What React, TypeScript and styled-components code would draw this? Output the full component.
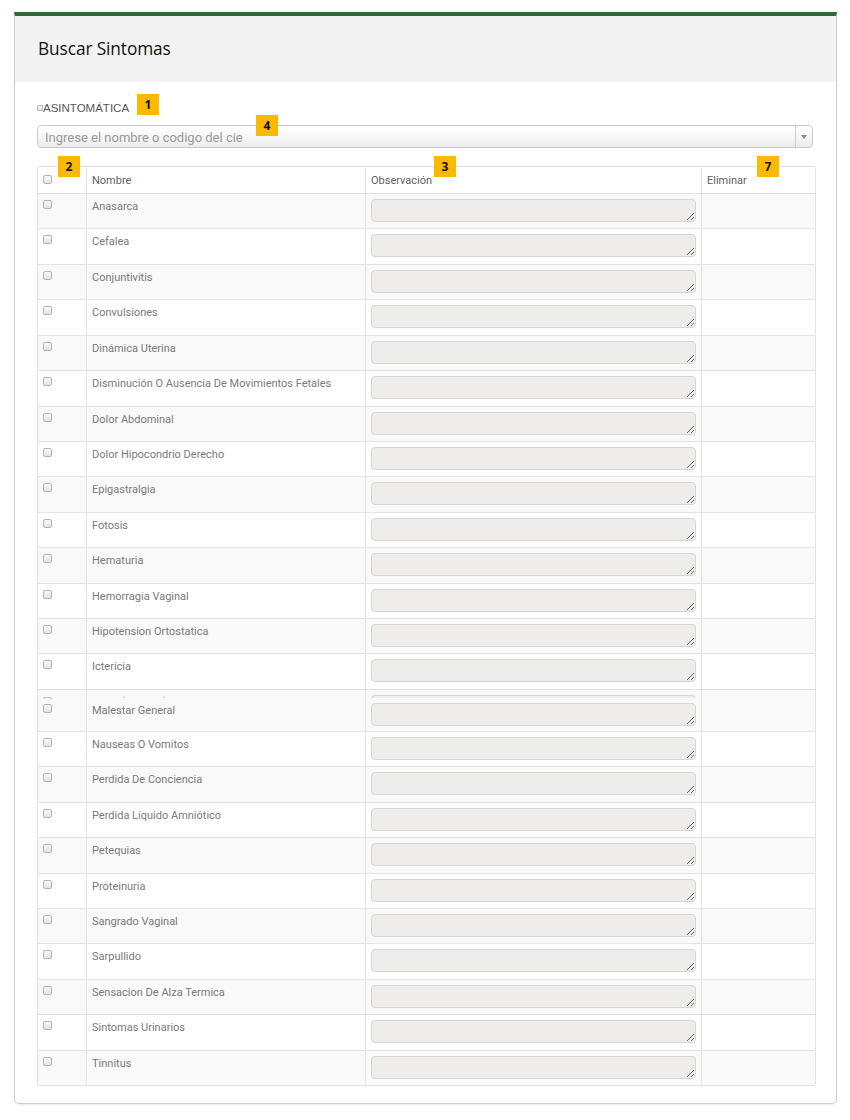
import React from "react";
import styled, { createGlobalStyle } from "styled-components";

const Global = createGlobalStyle`
  html, body { margin: 0; padding: 0; background: #ffffff; }
  body { font-family: Roboto, "Liberation Sans", Arial, sans-serif; }
  * { box-sizing: border-box; }
`;

const Page = styled.div`
  padding: 12px 13px 16px 14px;
  width: 850px;
`;

const Panel = styled.section`
  position: relative;
  width: 823px;
  border: 1px solid #cfcfcf;
  border-top: 4px solid #2d6a37;
  border-radius: 0 0 5px 5px;
  box-shadow: 0 1px 2px rgba(0, 0, 0, 0.08);
  background: #fff;
`;

const PanelHeader = styled.header`
  height: 66px;
  background: #f3f3f3;
  display: flex;
  align-items: center;
  padding: 0 0 1px 23px;
`;

const Title = styled.h1`
  margin: 0;
  font-family: "Open Sans", "Noto Sans", sans-serif;
  font-weight: 400;
  font-size: 17.3px;
  color: #111;
  letter-spacing: -0.1px;
`;

const PanelBody = styled.div`
  position: relative;
  padding: 18px 20px 17px 22px;
`;

const CheckLine = styled.label`
  display: flex;
  align-items: center;
  height: 16px;
  font-family: "Liberation Sans", Arial, sans-serif;
  font-size: 11.5px;
  color: #555;
`;

const TinyBox = styled.span<{ $size?: number }>`
  display: block;
  width: ${(p) => p.$size ?? 9}px;
  height: ${(p) => p.$size ?? 9}px;
  border: 1px solid #b4b4b4;
  border-radius: ${(p) => ((p.$size ?? 9) < 8 ? 1 : 2)}px;
  background: linear-gradient(#fafafa, #e2e2e2);
  flex: none;
`;

const SelectBox = styled.div`
  margin: 9px 3px 0 0;
  height: 23px;
  border: 1px solid #c9c9c9;
  border-radius: 4px;
  background: linear-gradient(#ffffff 0%, #f6f6f6 55%, #ebebeb 100%);
  display: flex;
  align-items: stretch;
  box-shadow: inset 0 1px 0 #fff;
`;

const SelectText = styled.div`
  flex: 1;
  padding-left: 7px;
  display: flex;
  align-items: center;
  font-size: 13px;
  color: #9a9a9a;
  padding-top: 1px;
`;

const SelectArrow = styled.div`
  width: 17px;
  border-left: 1px solid #d0d0d0;
  display: flex;
  align-items: center;
  justify-content: center;
  &::after {
    content: "";
    border-left: 3px solid transparent;
    border-right: 3px solid transparent;
    border-top: 4px solid #8a8a8a;
  }
`;

const Table = styled.div`
  margin: 18px 0 0 0;
  border: 1px solid #e3e3e3;
  border-radius: 2px;
`;

const Row = styled.div<{ $striped?: boolean; $head?: boolean; $seam?: boolean }>`
  display: grid;
  grid-template-columns: 48px 279px 336px 1fr;
  height: ${(p) => (p.$head ? "26px" : p.$seam ? "42px" : "35.43px")};
  background: ${(p) => (p.$striped ? "#f9f9f9" : "#fff")};
  & + & {
    border-top: 1px solid #e3e3e3;
  }
`;

const Cell = styled.div<{ $seam?: boolean; $first?: boolean; $head?: boolean }>`
  position: relative;
  padding: ${(p) => (p.$seam ? "13px" : p.$head ? "6px" : "5px")} 6px 0 5px;
  border-left: ${(p) => (p.$first ? "none" : "1px solid #e3e3e3")};
  overflow: hidden;
`;

const CheckCell = styled(Cell)`
  padding-left: 5px;
  padding-top: ${(p) => (p.$head ? "8px" : p.$seam ? "14px" : "6px")};
`;

const HeadText = styled.div`
  font-size: 11px;
  color: #5f5f5f;
  line-height: 13px;
  padding-top: 1px;
`;

const NameText = styled.div`
  font-size: 11px;
  color: #7a7a7a;
  line-height: 13px;
  padding-top: 1px;
`;

const Obs = styled.textarea`
  display: block;
  width: 325px;
  height: 23px;
  margin: 0;
  padding: 2px 4px;
  border: 1px solid #d6d6d4;
  border-radius: 4px;
  background: #eeedeb;
  resize: vertical;
  font-family: inherit;
  font-size: 11px;
  outline: none;
`;

const Sliver = styled.div<{ $w: number; $top: number; $left: number }>`
  position: absolute;
  top: ${(p) => p.$top}px;
  left: ${(p) => p.$left}px;
  width: ${(p) => p.$w}px;
  height: 3px;
  overflow: hidden;
  & > span {
    display: block;
    width: 100%;
    height: 12px;
    border: 1px solid #d6d6d4;
    border-radius: 4px;
    background: #eeedeb;
  }
`;

const BoxSliver = styled.div`
  position: absolute;
  top: 7px;
  left: 5px;
  width: 9px;
  height: 2px;
  overflow: hidden;
  & > span {
    display: block;
    width: 9px;
    height: 9px;
    border: 1px solid #bdbdbd;
    border-radius: 2px;
  }
`;

const Dot = styled.span<{ $left: number }>`
  position: absolute;
  top: 7px;
  left: ${(p) => p.$left}px;
  width: 1px;
  height: 1px;
  background: #aaa;
`;

const Badge = styled.span<{ $x: number; $y: number }>`
  position: absolute;
  left: ${(p) => p.$x}px;
  top: ${(p) => p.$y}px;
  width: 22px;
  height: 21px;
  background: #fbb900;
  color: #111;
  font-family: "Open Sans", "Noto Sans", sans-serif;
  font-weight: 700;
  font-size: 12px;
  display: flex;
  align-items: center;
  justify-content: center;
`;

const items = [
  "Anasarca",
  "Cefalea",
  "Conjuntivitis",
  "Convulsiones",
  "Dinámica Uterina",
  "Disminución O Ausencia De Movimientos Fetales",
  "Dolor Abdominal",
  "Dolor Hipocondrio Derecho",
  "Epigastralgia",
  "Fotosis",
  "Hematuria",
  "Hemorragia Vaginal",
  "Hipotension Ortostatica",
  "Ictericia",
  "Malestar General",
  "Nauseas O Vomitos",
  "Perdida De Conciencia",
  "Perdida Líquido Amniótico",
  "Petequias",
  "Proteinuria",
  "Sangrado Vaginal",
  "Sarpullido",
  "Sensacion De Alza Termica",
  "Sintomas Urinarios",
  "Tinnitus",
];

export default function App() {
  return (
    <>
      <Global />
      <Page>
        <Panel>
          <PanelHeader>
            <Title>Buscar Sintomas</Title>
          </PanelHeader>
          <PanelBody>
            <CheckLine>
              <TinyBox $size={6} />
              ASINTOMÁTICA
            </CheckLine>
            <SelectBox>
              <SelectText>Ingrese el nombre o codigo del cie</SelectText>
              <SelectArrow />
            </SelectBox>
            <Table>
              <Row $head>
                <CheckCell $first $head>
                  <TinyBox />
                </CheckCell>
                <Cell $head>
                  <HeadText>Nombre</HeadText>
                </Cell>
                <Cell $head>
                  <HeadText>Observación</HeadText>
                </Cell>
                <Cell $head>
                  <HeadText>Eliminar</HeadText>
                </Cell>
              </Row>
              {items.map((name, i) => {
                const seam = name === "Malestar General";
                return (
                  <Row key={name} $striped={i % 2 === 0} $seam={seam}>
                    <CheckCell $first $seam={seam}>
                      {seam && (
                        <BoxSliver>
                          <span />
                        </BoxSliver>
                      )}
                      <TinyBox />
                    </CheckCell>
                    <Cell $seam={seam}>
                      {seam && (
                        <>
                          <Dot $left={37} />
                          <Dot $left={77} />
                        </>
                      )}
                      <NameText>{name}</NameText>
                    </Cell>
                    <Cell $seam={seam}>
                      {seam && (
                        <Sliver $w={325} $top={5} $left={5}>
                          <span />
                        </Sliver>
                      )}
                      <Obs readOnly />
                    </Cell>
                    <Cell $seam={seam} />
                  </Row>
                );
              })}
            </Table>
            <Badge $x={122} $y={12}>1</Badge>
            <Badge $x={241} $y={33}>4</Badge>
            <Badge $x={43} $y={74}>2</Badge>
            <Badge $x={419} $y={74}>3</Badge>
            <Badge $x={742} $y={74}>7</Badge>
          </PanelBody>
        </Panel>
      </Page>
    </>
  );
}
